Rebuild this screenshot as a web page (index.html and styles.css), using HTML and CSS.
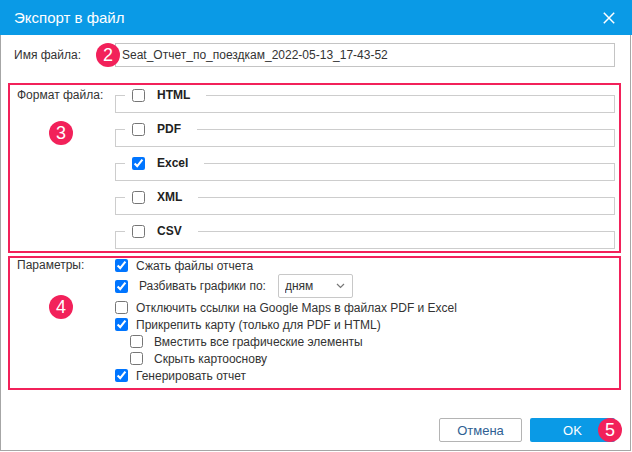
FILE: index.html
```html
<!DOCTYPE html>
<html lang="ru">
<head>
  <meta charset="UTF-8">
  <title>Экспорт в файл</title>
  <link rel="stylesheet" href="styles.css">
</head>
<body>
  <div class="dialog-head">
    <span class="dialog-title">Экспорт в файл</span>
    <button class="close-btn">
      <svg width="12" height="12" viewBox="0 0 12 12"><path d="M0.8 0.8L11.2 11.2M11.2 0.8L0.8 11.2" stroke="#fff" stroke-width="1.5"/></svg>
    </button>
  </div>

  <div class="dialog-body">
    <div class="file-row">
      <label class="file-label">Имя файла:</label>
      <div class="file-wrap">
        <span class="badge badge-file">2</span>
        <input type="text" class="file-input" value="Seat_Отчет_по_поездкам_2022-05-13_17-43-52">
      </div>
    </div>

    <div class="section formats">
      <div class="side">
        <span class="side-label">Формат файла:</span>
        <span class="badge">3</span>
      </div>
      <div class="format-list">
        <fieldset class="format"><legend><input type="checkbox"><span>HTML</span></legend></fieldset>
        <fieldset class="format"><legend><input type="checkbox"><span>PDF</span></legend></fieldset>
        <fieldset class="format"><legend><input type="checkbox" checked><span>Excel</span></legend></fieldset>
        <fieldset class="format"><legend><input type="checkbox"><span>XML</span></legend></fieldset>
        <fieldset class="format"><legend><input type="checkbox"><span>CSV</span></legend></fieldset>
      </div>
    </div>

    <div class="section params">
      <div class="side">
        <span class="side-label">Параметры:</span>
        <span class="badge">4</span>
      </div>
      <div class="param-list">
        <label class="opt first"><input type="checkbox" checked>Сжать файлы отчета</label>
        <div class="opt opt-select">
          <input type="checkbox" checked><span class="split-label">Разбивать графики по:</span>
          <div class="select-wrap">
            <select class="select"><option>дням</option></select>
            <svg class="chevron" width="9" height="6" viewBox="0 0 9 6"><path d="M1 1L4.5 4.5L8 1" fill="none" stroke="#777" stroke-width="1.2"/></svg>
          </div>
        </div>
        <label class="opt"><input type="checkbox">Отключить ссылки на Google Maps в файлах PDF и Excel</label>
        <label class="opt"><input type="checkbox" checked>Прикрепить карту (только для PDF и HTML)</label>
        <label class="opt sub"><input type="checkbox">Вместить все графические элементы</label>
        <label class="opt sub"><input type="checkbox">Скрыть картооснову</label>
        <label class="opt"><input type="checkbox" checked>Генерировать отчет</label>
      </div>
    </div>

    <div class="footer">
      <button class="btn btn-cancel">Отмена</button>
      <div class="ok-wrap">
        <button class="btn btn-ok">OK</button>
        <span class="badge badge-ok">5</span>
      </div>
    </div>
  </div>
</body>
</html>
```

FILE: styles.css
```css
:root {
  --blue: #0a9ae6;
  --red: #f2215a;
  --text: #333;
  --line: #cdcdcd;
}

* {
  box-sizing: border-box;
}
body {
  margin: 0;
  width: 632px;
  height: 452px;
  background: #fff;
  font-family: "Liberation Sans", Arial, sans-serif;
  font-size: 12px;
  color: var(--text);
}
.dialog-head {
  height: 35px;
  background: var(--blue);
  display: flex;
  align-items: center;
  justify-content: space-between;
  padding: 0 17px 0 14px;
}
.dialog-title {
  color: #fff;
  font-size: 15px;
}
.close-btn {
  background: none;
  border: none;
  padding: 0;
  display: flex;
  margin-top: 1px;
}
.dialog-body {
  width: 631px;
  height: 416px;
  border: 1px solid #a6a6a6;
  border-top: none;
  display: flex;
  flex-direction: column;
  padding: 0 9px 8px 7px;
}
.file-row {
  display: flex;
  align-items: center;
  height: 24px;
  margin-top: 8px;
  padding: 0 6px;
}
.file-label {
  width: 101px;
}
.file-wrap {
  position: relative;
  flex: 1;
}
.file-input {
  display: block;
  width: 100%;
  height: 24px;
  border: 1px solid #c4c4c4;
  padding: 0 0 0 6px;
  font: inherit;
  color: var(--text);
}
.badge {
  display: flex;
  align-items: center;
  justify-content: center;
  width: 24px;
  height: 24px;
  border-radius: 50%;
  background: var(--red);
  color: #fff;
  font-size: 18px;
}
.badge-file {
  position: absolute;
  left: -19px;
  top: 0;
}

.section {
  display: flex;
  border: 2px solid var(--red);
}
.formats {
  margin-top: 16px;
  padding: 2px 4px 2px 0;
}
.params {
  margin-top: 3px;
  padding: 0 4px 4px 0;
}
.side {
  width: 105px;
  padding-left: 7px;
  display: flex;
  flex-direction: column;
}
.side-label {
  line-height: 16px;
}
.side .badge {
  margin-left: 32px;
}
.formats .side .badge {
  margin-top: 18px;
}
.params .side-label {
  line-height: 15px;
}
.params .side .badge {
  margin-top: 22px;
}

.format-list {
  flex: 1;
}
.format {
  margin: 0 0 8px;
  padding: 0 0 9px;
  border: 1px solid var(--line);
  min-width: 0;
}
.format:last-child {
  margin-bottom: 0;
}
.format legend {
  display: flex;
  align-items: center;
  height: 16px;
  margin-left: 9px;
  padding: 0 16px 0 7px;
  font-weight: bold;
  color: #222;
}
.format input {
  margin: 0 12px 0 0;
  width: 13px;
  height: 13px;
}

.param-list {
  flex: 1;
}
.opt {
  display: flex;
  align-items: center;
  height: 17px;
}
.opt.first {
  height: 15px;
}
.opt input {
  margin: 0 8px 0 0;
  width: 13px;
  height: 13px;
}
.opt.sub {
  padding-left: 15px;
}
.opt.sub input {
  margin-right: 11px;
}
.opt-select {
  height: 26px;
}
.split-label {
  margin-left: 3px;
}
.select-wrap {
  position: relative;
  margin-left: 12px;
}
.select {
  appearance: none;
  width: 75px;
  height: 24px;
  border: 1px solid #c8c8c8;
  border-radius: 2px;
  background: #fff;
  padding: 0 0 0 6px;
  font: inherit;
  color: var(--text);
}
.chevron {
  position: absolute;
  right: 8px;
  top: 9px;
}

.footer {
  margin-top: auto;
  display: flex;
  justify-content: flex-end;
  gap: 8px;
  padding-right: 6px;
}
.btn {
  height: 24px;
  border-radius: 2px;
  font: inherit;
  font-size: 13px;
}
.btn-cancel {
  width: 83px;
  background: #fff;
  border: 1px solid #b4b4b4;
  color: #2f5f93;
}
.ok-wrap {
  position: relative;
}
.btn-ok {
  width: 85px;
  background: var(--blue);
  border: none;
  color: #fff;
}
.badge-ok {
  position: absolute;
  right: -7px;
  top: 0;
}
```
